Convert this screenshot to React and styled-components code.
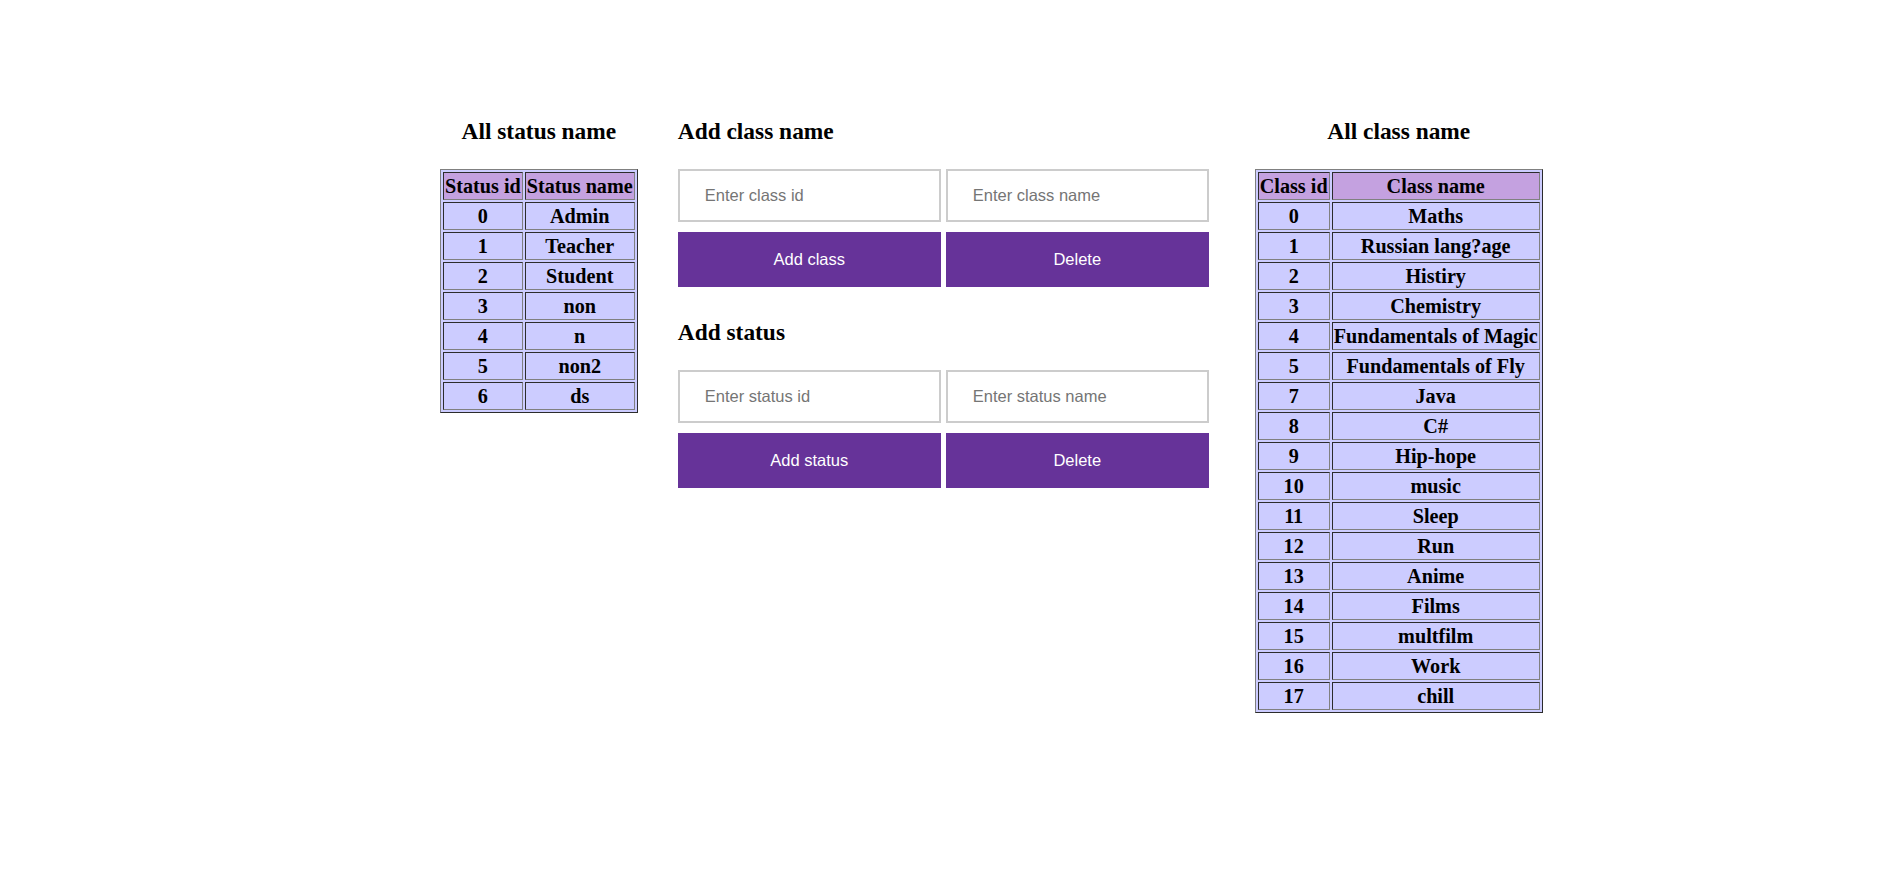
import React from 'react'
import styled, { createGlobalStyle } from 'styled-components'

const GlobalStyle = createGlobalStyle`
  body {
    margin: 0;
    background: #fff;
    font-family: "Liberation Serif", "Times New Roman", serif;
    font-size: 20px;
    color: #000;
  }
`

const UI = {
  Page: styled.div`
    display: flex;
    align-items: flex-start;
    padding: 95px 0 0 440px;
  `,
  Column: styled.div`
    display: flex;
    flex-direction: column;
    align-items: ${props => props.center ? 'center' : 'stretch'};
    margin-right: ${props => props.gap || 0}px;
  `,
  Header: styled.h3`
    font-size: 23.4px;
    font-weight: bold;
    margin: 23.4px 0;
    line-height: normal;
  `,
  Table: styled.table`
    border: 1px outset #808080;
    border-spacing: 2px;
    background: #ccccff;
    font-size: 20.2px;
    font-weight: bold;
  `,
  Cell: styled.td`
    border: 1px inset #808080;
    padding: 1px;
    line-height: 24px;
    text-align: center;
    white-space: nowrap;
    background: ${props => props.head ? '#c4a1e0' : '#ccccff'};
  `,
  Form: styled.div`
    display: flex;
    flex-direction: column;
    gap: 10px;
    margin-bottom: 9px;
  `,
  Row: styled.div`
    display: flex;
    gap: 5px;
  `,
  Input: styled.input`
    box-sizing: border-box;
    width: 263px;
    height: 53px;
    border: 2px solid #ccc;
    padding: 0 25px;
    font-family: "Liberation Sans", Arial, sans-serif;
    font-size: 16.5px;
    outline: none;
    &::placeholder {
      color: #757575;
    }
  `,
  Button: styled.button`
    width: 263px;
    height: 55px;
    border: none;
    background: #663399;
    color: #fff;
    font-family: "Liberation Sans", Arial, sans-serif;
    font-size: 16.5px;
    cursor: pointer;
  `,
}

const statuses = [
  [0, 'Admin'], [1, 'Teacher'], [2, 'Student'], [3, 'non'],
  [4, 'n'], [5, 'non2'], [6, 'ds'],
]

const classes = [
  [0, 'Maths'], [1, 'Russian lang?age'], [2, 'Histiry'], [3, 'Chemistry'],
  [4, 'Fundamentals of Magic'], [5, 'Fundamentals of Fly'], [7, 'Java'],
  [8, 'C#'], [9, 'Hip-hope'], [10, 'music'], [11, 'Sleep'], [12, 'Run'],
  [13, 'Anime'], [14, 'Films'], [15, 'multfilm'], [16, 'Work'], [17, 'chill'],
]

const DataTable = ({ head, rows }) => (
  <UI.Table>
    <tbody>
      <tr>
        <UI.Cell as="th" head>{head[0]}</UI.Cell>
        <UI.Cell as="th" head>{head[1]}</UI.Cell>
      </tr>
      {rows.map(([id, name]) => (
        <tr key={id}>
          <UI.Cell>{id}</UI.Cell>
          <UI.Cell>{name}</UI.Cell>
        </tr>
      ))}
    </tbody>
  </UI.Table>
)

const AddForm = ({ title, idHolder, nameHolder, addLabel }) => (
  <div>
    <UI.Header>{title}</UI.Header>
    <UI.Form>
      <UI.Row>
        <UI.Input placeholder={idHolder} />
        <UI.Input placeholder={nameHolder} />
      </UI.Row>
      <UI.Row>
        <UI.Button>{addLabel}</UI.Button>
        <UI.Button>Delete</UI.Button>
      </UI.Row>
    </UI.Form>
  </div>
)

export default function App() {
  return (
    <UI.Page>
      <GlobalStyle />
      <UI.Column center gap={40}>
        <UI.Header>All status name</UI.Header>
        <DataTable head={['Status id', 'Status name']} rows={statuses} />
      </UI.Column>
      <UI.Column gap={46}>
        <AddForm
          title="Add class name"
          idHolder="Enter class id"
          nameHolder="Enter class name"
          addLabel="Add class" />
        <AddForm
          title="Add status"
          idHolder="Enter status id"
          nameHolder="Enter status name"
          addLabel="Add status" />
      </UI.Column>
      <UI.Column center>
        <UI.Header>All class name</UI.Header>
        <DataTable head={['Class id', 'Class name']} rows={classes} />
      </UI.Column>
    </UI.Page>
  )
}
